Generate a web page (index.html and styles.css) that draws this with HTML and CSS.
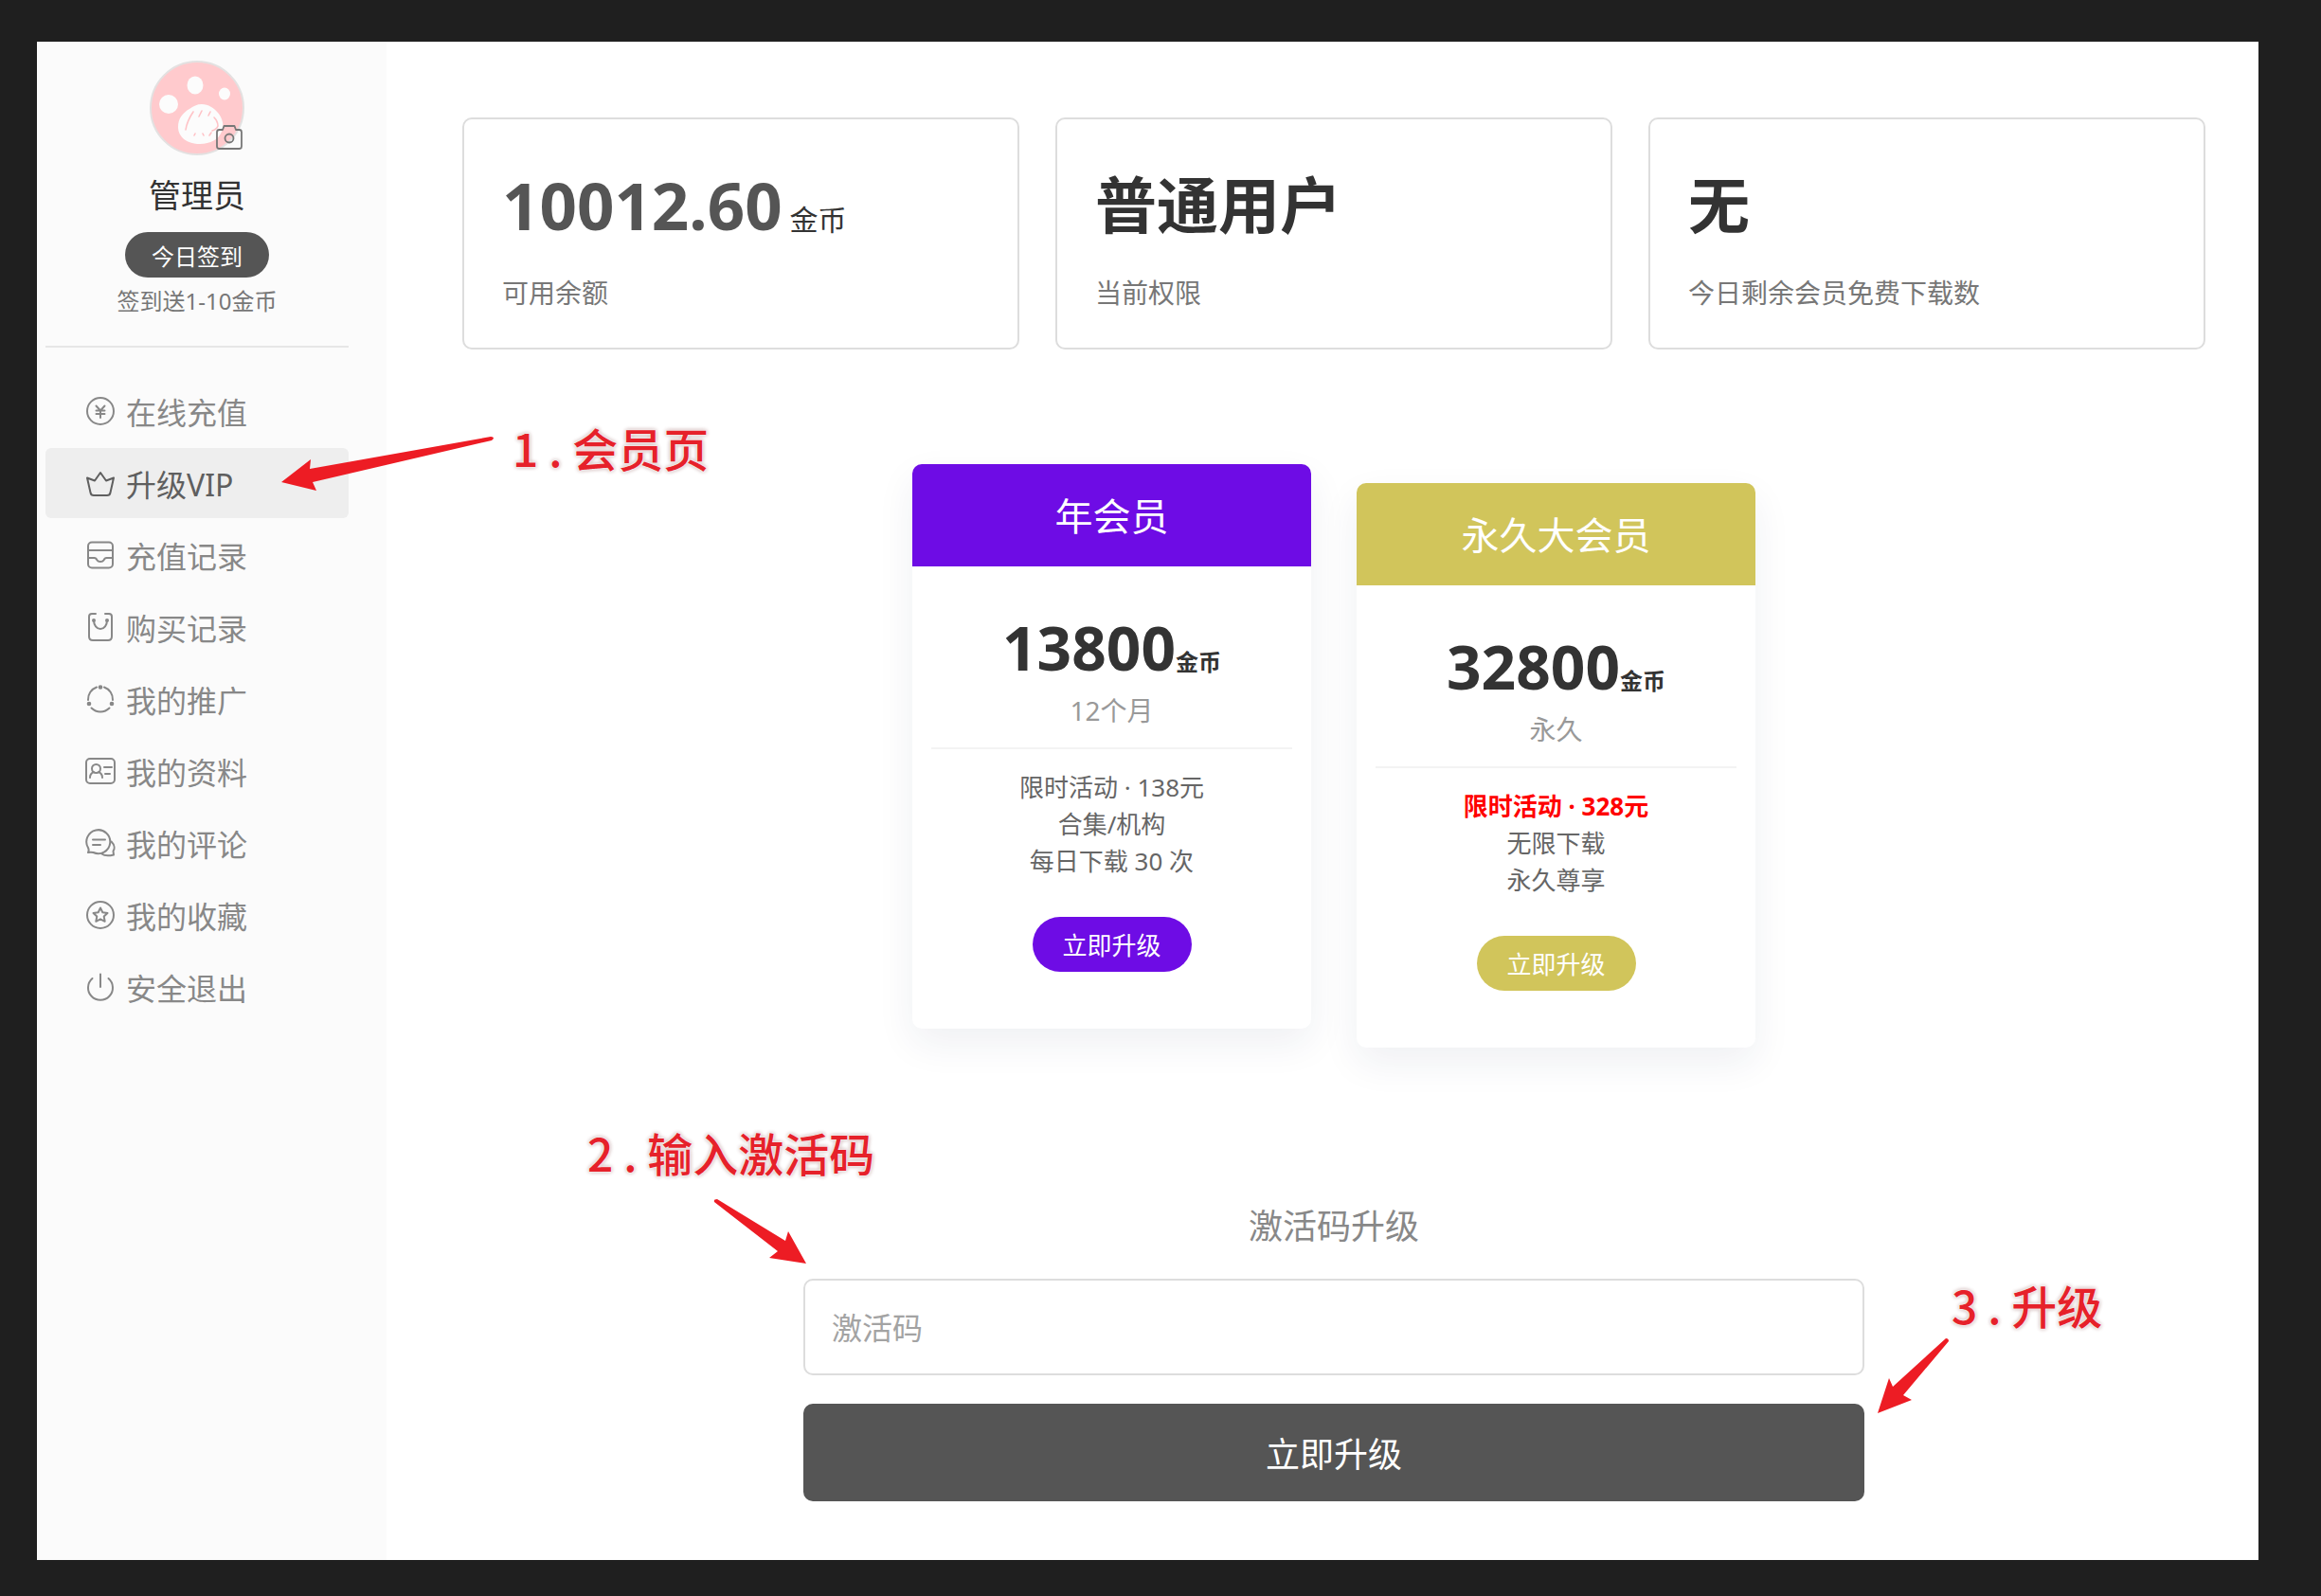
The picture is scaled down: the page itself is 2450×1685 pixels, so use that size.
FILE: index.html
```html
<!DOCTYPE html>
<html lang="zh-CN">
<head>
	<title>升级VIP</title>
	<meta charset="utf-8">
	<meta name="viewport" content="width=device-width, initial-scale=1.0">
	<link rel="stylesheet" href="styles.css">
</head>
<body>

<div class="page">
	<aside class="sidebar">
		<div class="profile">
			<div class="avatar">
				<svg viewBox="0 0 100 100" width="100" height="100">
					<circle cx="50" cy="50" r="49" fill="#ffcacd" stroke="#e3e1e1" stroke-width="2"/>
					<g fill="#fcfcfc">
						<ellipse cx="48" cy="26" rx="8.5" ry="9.5"/>
						<ellipse cx="79" cy="35" rx="6" ry="6.5"/>
						<circle cx="20" cy="46" r="10"/>
						<path d="M55 46c7 0 13 4 17 9 5 6 7 14 4 20-3 8-12 13-23 13-13 0-23-7-23-18 0-9 5-15 12-19 4-3 8-5 13-5z"/>
					</g>
					<g fill="none" stroke="#ffc3c7" stroke-width="1.6" stroke-linecap="round">
						<path d="M46 54c-4 6-7 12-8 19M55 53l-3 6M64 54l-2 4M68 60c3 3 4 6 4 9-1 3-3 4-6 5M48 77l-1 2M56 77l1 2M65 76l-2 3"/>
					</g>
				</svg>
				<button class="avatar-edit" type="button" aria-label="更换头像">
					<svg viewBox="0 0 28 26" width="28" height="26" fill="none" stroke="#777" stroke-width="1.8" stroke-linejoin="round">
						<path d="M3.500 5H7l1.500-4h11L21 5h3.500Q27 5 27 7.500v15Q27 25 24.500 25h-21Q1 25 1 22.500v-15Q1 5 3.500 5z"/>
						<circle cx="14" cy="14" r="4.500"/>
					</svg>
				</button>
			</div>
			<div class="profile-name">管理员</div>
			<button class="checkin" type="button">今日签到</button>
			<div class="profile-hint">签到送1-10金币</div>
		</div>

		<nav class="menu">
			<a href="#recharge">
				<svg viewBox="0 0 32 32"><circle cx="16" cy="16" r="14"/><path d="M11.500 10.500l4.500 5 4.500-5M16 15.500V23M11.500 15.500h9M11.500 19h9"/></svg>
				在线充值
			</a>
			<div class="menu-current">
				<a class="active" href="#vip">
					<svg viewBox="0 0 32 32"><path d="M2 10.500l3.500 15.500Q6 29 9 29h14q3 0 3.500-3L30 10.500l-8 3L16 5l-6 8.500z"/></svg>
					升级VIP
				</a>
				<div class="note note-1">
					<svg viewBox="0 0 224 60" width="224" height="60"><path d="M0 49L31 25 30 35 221 1q3 0 3 2l-2 2L33 49l4 9z"/></svg>
					<span>1 . 会员页</span>
				</div>
			</div>
			<a href="#recharge-log">
				<svg viewBox="0 0 32 32"><rect x="3" y="2.500" width="26" height="27" rx="4"/><path d="M3 11h26M3 19h6.500q2 0 3 2.500 1 1.500 3.500 1.500t3.500-1.500q1-2.500 3-2.500H29"/></svg>
				充值记录
			</a>
			<a href="#orders">
				<svg viewBox="0 0 32 32"><path d="M11 2H7Q4 2 4 5v21q0 4 4 4h16q4 0 4-4V5q0-3-3-3h-4"/><path d="M9 9c0 5 3 9 7 9s7-4 7-9"/><circle class="dot" cx="9" cy="9" r="2"/><circle class="dot" cx="23" cy="9" r="2"/></svg>
				购买记录
			</a>
			<a href="#referral">
				<svg viewBox="0 0 32 32"><path d="M12 3.500A13.500 13.500 0 0 0 3 17M20 3.500A13.500 13.500 0 0 1 29 17M6.500 25.500a13.500 13.500 0 0 0 19 0"/><circle class="dot" cx="16" cy="3.500" r="2.300"/><circle class="dot" cx="4" cy="21" r="2.300"/><circle class="dot" cx="28" cy="21" r="2.300"/></svg>
				我的推广
			</a>
			<a href="#profile">
				<svg viewBox="0 0 32 32"><rect x="1" y="3" width="30" height="26" rx="4"/><circle cx="11.500" cy="13.500" r="4.500"/><path d="M5 23c0-3 1.500-5 4-6M18 23c0-3-1.500-5-4-6M20 12h8M21 19h5"/></svg>
				我的资料
			</a>
			<a href="#comments">
				<svg viewBox="0 0 32 32"><path d="M3 26c1-2 1-3 0-5A12.500 12.500 0 1 1 8.500 26Q6 25.500 3 26z"/><path d="M8 12.500h13M8 18h8M27.500 14.500c4 4 3.500 8 2 10l.5 4c-6 1.500-10 1-12.500-1"/></svg>
				我的评论
			</a>
			<a href="#favorites">
				<svg viewBox="0 0 32 32"><circle cx="16" cy="16" r="14"/><path d="M16 8.500l2.300 4.800 5.200.7-3.800 3.600 1 5.200-4.700-2.500-4.700 2.500 1-5.200-3.800-3.600 5.200-.7z"/></svg>
				我的收藏
			</a>
			<a href="#logout">
				<svg viewBox="0 0 32 32"><path d="M16 2.500V16M7.500 7a13 13 0 1 0 17 0"/></svg>
				安全退出
			</a>
		</nav>
	</aside>

	<main class="content">
		<section class="stats">
			<div class="stat">
				<div class="stat-value"><b class="balance">10012.60</b> <small>金币</small></div>
				<div class="stat-label">可用余额</div>
			</div>
			<div class="stat">
				<div class="stat-value"><b>普通用户</b></div>
				<div class="stat-label">当前权限</div>
			</div>
			<div class="stat">
				<div class="stat-value"><b>无</b></div>
				<div class="stat-label">今日剩余会员免费下载数</div>
			</div>
		</section>

		<section class="plans">
			<div class="plan plan-year">
				<h2>年会员</h2>
				<div class="plan-body">
					<div class="price">13800<small>金币</small></div>
					<div class="period">12个月</div>
					<ul>
						<li>限时活动 · 138元</li>
						<li>合集/机构</li>
						<li>每日下载 30 次</li>
					</ul>
					<button type="button">立即升级</button>
				</div>
			</div>
			<div class="plan plan-forever">
				<h2>永久大会员</h2>
				<div class="plan-body">
					<div class="price">32800<small>金币</small></div>
					<div class="period">永久</div>
					<ul>
						<li class="hot">限时活动 · 328元</li>
						<li>无限下载</li>
						<li>永久尊享</li>
					</ul>
					<button type="button">立即升级</button>
				</div>
			</div>
		</section>

		<form class="redeem">
			<label for="code">激活码升级</label>
			<input type="text" id="code" placeholder="激活码">
			<button type="button">立即升级</button>

			<div class="note note-2">
				<span>2 . 输入激活码</span>
				<svg viewBox="0 0 100 70" width="100" height="70"><path d="M5 1L77 45l3-10 19 34-39-6 9-7L2 4Q1 1 5 1z"/></svg>
			</div>
			<div class="note note-3">
				<span>3 . 升级</span>
				<svg viewBox="0 0 76 80" width="76" height="80"><path d="M0 80L12 43l4 9L72 1q3 0 3 3L27 61l9 5z"/></svg>
			</div>
		</form>
	</main>
</div>

</body>
</html>
```
FILE: styles.css
```css
* {
	box-sizing: border-box;
}
body {
	margin: 0;
	padding: 44px 66px 37px 39px;
	font-family: "Noto Sans", "Noto Sans CJK SC", sans-serif;
	color: #333;
	background: #1f1f1f;
}
button,
input {
	font-family: inherit;
}
button {
	padding: 0;
	border: 0;
	color: #fff;
	cursor: pointer;
}
.page {
	display: flex;
	background: #fff;
}

/* sidebar */
.sidebar {
	flex: 0 0 369px;
	padding: 20px 40px 20px 9px;
	background: #fbfbfb;
}
.profile {
	display: flex;
	flex-direction: column;
	align-items: center;
	padding-bottom: 29px;
	border-bottom: 2px solid #e6e6e6;
}
.avatar {
	position: relative;
	height: 100px;
}
.avatar svg {
	display: block;
}
.avatar-edit {
	position: absolute;
	right: 2px;
	bottom: 6px;
	background: none;
}
.profile-name {
	margin: 18px 0 15px;
	font-size: 34px;
	line-height: 48px;
}
.checkin {
	width: 152px;
	height: 48px;
	border-radius: 24px;
	font-size: 24px;
	background: #555;
}
.profile-hint {
	margin-top: 7px;
	font-size: 24px;
	line-height: 36px;
	color: #777;
}
.menu {
	display: flex;
	flex-direction: column;
	gap: 2px;
	padding-top: 30px;
}
.menu a {
	display: flex;
	align-items: center;
	gap: 11px;
	height: 74px;
	padding-left: 42px;
	border-radius: 6px;
	font-size: 32px;
	color: #888;
	text-decoration: none;
}
.menu a.active {
	color: #5f5f5f;
	background: #eee;
}
.menu a svg {
	width: 32px;
	height: 32px;
	fill: none;
	stroke: currentColor;
	stroke-width: 2;
	stroke-linecap: round;
	stroke-linejoin: round;
}
.menu a .dot {
	fill: currentColor;
	stroke: none;
}
.menu-current {
	position: relative;
}

/* content */
.content {
	flex: 1;
	padding: 80px 56px 62px 80px;
}
.stats {
	display: grid;
	grid-template-columns: repeat(3, 1fr);
	gap: 38px;
}
.stat {
	padding: 42px 40px 38px;
	border: 2px solid #ddd;
	border-radius: 10px;
}
.stat-value {
	height: 96px;
	font-size: 30px;
	line-height: 96px;
}
.stat-value b {
	font-size: 65px;
}
.stat-value .balance {
	font-size: 69px;
	color: #555;
}
.stat-value small {
	font-size: 30px;
}
.stat-label {
	margin-top: 25px;
	font-size: 28px;
	line-height: 40px;
	color: #777;
}

/* plans */
.plans {
	display: flex;
	justify-content: center;
	align-items: flex-start;
	gap: 48px;
	padding: 121px 0 162px;
}
.plan {
	width: 421px;
	border-radius: 10px;
	overflow: hidden;
	text-align: center;
	background: #fff;
	box-shadow: 0 16px 40px rgba(30, 40, 80, 0.07);
}
.plan-forever {
	margin-top: 20px;
}
.plan h2 {
	margin: 0;
	padding-top: 2px;
	font-size: 40px;
	font-weight: 400;
	line-height: 106px;
	color: #fff;
}
.plan-body {
	padding: 46px 20px 60px;
}
.price {
	font-size: 64px;
	font-weight: 700;
	line-height: 80px;
}
.price small {
	font-size: 24px;
	line-height: 24px;
}
.period {
	padding: 6px 0 19px;
	border-bottom: 2px solid #f3f3f3;
	font-size: 28px;
	line-height: 40px;
	color: #999;
}
.plan ul {
	margin: 21px 0 39px;
	padding: 0;
	list-style: none;
	font-size: 26px;
	line-height: 39px;
	color: #666;
}
.plan .hot {
	font-weight: 700;
	color: #f00;
}
.plan button {
	width: 168px;
	height: 58px;
	border-radius: 29px;
	font-size: 26px;
}
.plan-year h2,
.plan-year button {
	background: #6e0ce5;
}
.plan-forever h2,
.plan-forever button {
	background: #d1c55b;
}

/* redeem form */
.redeem {
	position: relative;
	display: flex;
	flex-direction: column;
	max-width: 1120px;
	margin: 0 auto;
}
.redeem label {
	margin-bottom: 28px;
	font-size: 36px;
	line-height: 54px;
	text-align: center;
	color: #888;
}
.redeem input {
	height: 102px;
	margin-bottom: 30px;
	padding: 0 28px;
	border: 2px solid #ddd;
	border-radius: 10px;
	font-size: 32px;
	color: #333;
}
.redeem input::placeholder {
	color: #a3a3a3;
}
.redeem button {
	height: 103px;
	border-radius: 10px;
	font-size: 36px;
	background: #555;
}

/* step notes over the page */
.note {
	position: absolute;
	z-index: 5;
	display: flex;
	font-family: "Noto Sans CJK SC", sans-serif;
	font-size: 48px;
	font-weight: 500;
	line-height: 60px;
	white-space: nowrap;
	color: #e6212a;
	text-shadow: 0 0 2px #fff, 0 0 3px #fff, 0 0 4px #c99, 0 0 5px #ccc;
	pointer-events: none;
}
.note svg {
	fill: #ed1c24;
}
.note-1 {
	left: 249px;
	top: -31px;
	gap: 20px;
}
.note-1 svg {
	margin-top: 18px;
}
.note-2 {
	left: -228px;
	top: -82px;
	flex-direction: column;
	gap: 19px;
}
.note-2 svg {
	margin-left: 132px;
}
.note-3 {
	left: 100%;
	top: 79px;
	flex-direction: column;
	padding-left: 14px;
	gap: 5px;
}
.note-3 span {
	padding-left: 78px;
}
```
